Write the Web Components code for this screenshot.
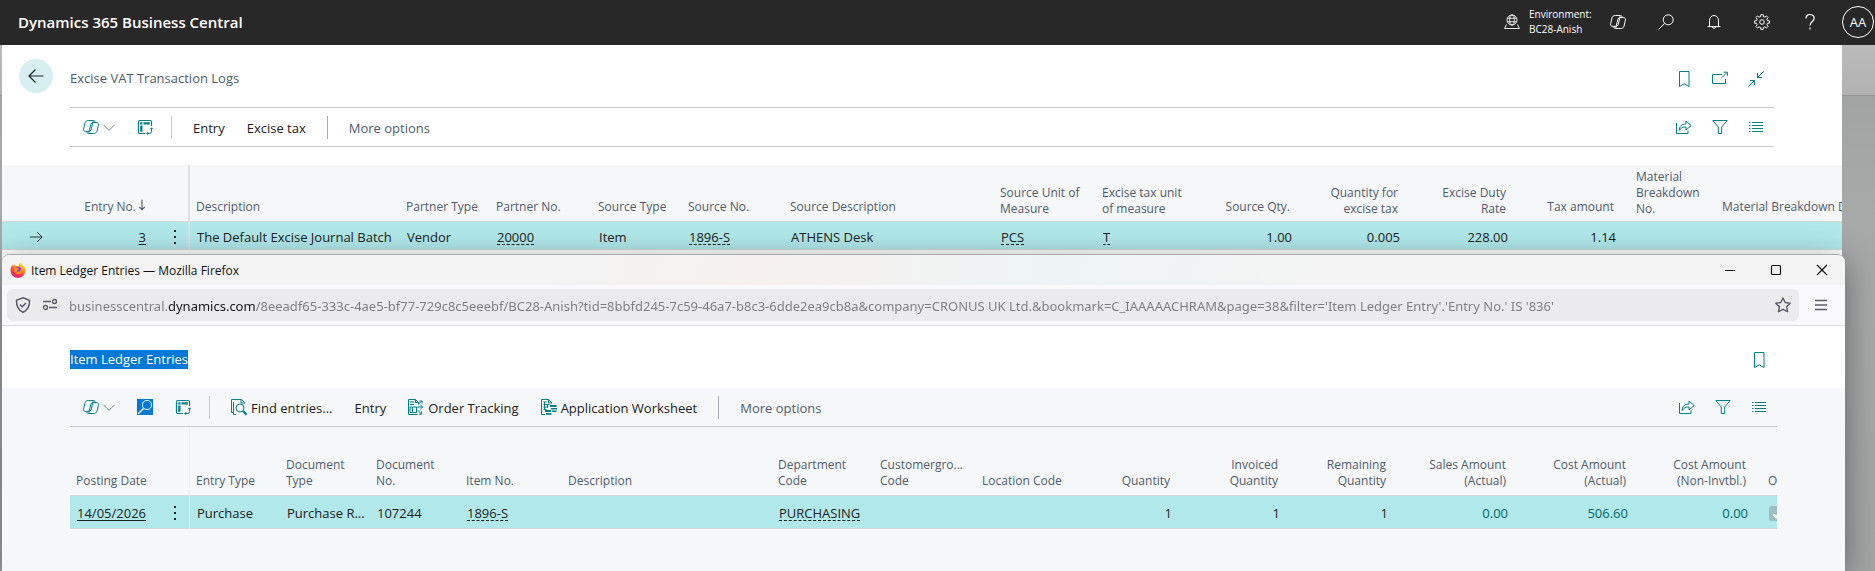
<!DOCTYPE html>
<html lang="en">
<head>
<meta charset="utf-8">
<title>Dynamics 365 Business Central</title>
<style>
  html, body {
    height: 100%;
    margin: 0;
  }

  body {
    --font: "Open Sans", "Noto Sans", sans-serif;
    --color-teal: #00808a;
    --color-dark: #212121;
    --color-muted: #505c6d;
    --color-surface: #f5f7f9;
    --color-row: #b1e9eb;
    --color-line: #c9cbcf;
    --text-small: 10px;
    --text-caption: 12px;
    --text-body: 13px;
    --text-title: 15px;
    display: flex;
    flex-direction: column;
    overflow: hidden;
    font-family: var(--font);
    font-size: var(--text-body);
    color: var(--color-dark);
    background-color: #a3a4a4;
  }

  main {
    flex: 1;
    min-height: 0;
    position: relative;
    overflow: hidden;
    padding: 0 33px 0 2px;
    background:
      linear-gradient(#949696, #949696) 0 50px / 100% 1px no-repeat,
      linear-gradient(#bababa, #b2b2b2) 0 0 / 100% 50px no-repeat,
      linear-gradient(#a0a1a1, #a7a8a8 30%, #a3a4a4);
  }

  /* The second browser window floats over the first page */
  browser-window {
    position: absolute;
    top: 209px;
    left: 2px;
    right: 30px;
    bottom: 0;
  }
</style>
</head>
<body>
<app-header></app-header>
<main>
  <list-page heading="Excise VAT Transaction Logs" back actions="bookmark,popout,collapse">
    <action-bar slot="actions" data-items='[
      {"icon": "copilot", "label": "Copilot", "menu": true},
      {"icon": "analyse", "label": "Analyse"},
      {"divider": "light"},
      {"text": "Entry"},
      {"text": "Excise tax"},
      {"divider": "dark"},
      {"text": "More options", "muted": true}
    ]' framed></action-bar>
    <data-grid id="logs" slot="grid" wide></data-grid>
  </list-page>
  <browser-window heading="Item Ledger Entries — Mozilla Firefox">
    <list-page heading="Item Ledger Entries" selected actions="bookmark">
      <action-bar slot="actions" data-items='[
        {"icon": "copilot", "label": "Copilot", "menu": true},
        {"icon": "find", "label": "Search"},
        {"icon": "analyse", "label": "Analyse"},
        {"divider": "light"},
        {"icon": "entries", "text": "Find entries..."},
        {"text": "Entry"},
        {"icon": "tracking", "text": "Order Tracking"},
        {"icon": "worksheet", "text": "Application Worksheet"},
        {"divider": "dark"},
        {"text": "More options", "muted": true}
      ]'></action-bar>
      <data-grid id="entries" slot="grid"></data-grid>
    </list-page>
  </browser-window>
</main>

<script>
// Outline of the settings gear, eight teeth round a centre of 8,8
function gearPath() {
  const points = [];
  for (let i = 0; i < 8; i++) {
    [[-14, 5.6], [-9, 7.5], [9, 7.5], [14, 5.6]].forEach(([offset, radius]) => {
      const angle = ((i * 45 + offset) * Math.PI) / 180;
      points.push(`${(8 + radius * Math.cos(angle)).toFixed(2)} ${(8 + radius * Math.sin(angle)).toFixed(2)}`);
    });
  }
  return `M${points.join("L")}Z`;
}

const leaf = "M5.300 1.500h3.700c.9 0 1.300.6 1.100 1.500L8 11c-.3.900-.9 1.400-1.800 1.400H2.800c-1.800 0-2.500-1-2.200-2.600l1.400-6C2.400 2.300 3.600 1.500 5.300 1.500z";

const icons = {
  copilot: `<path d="${leaf}"/><path d="${leaf}" transform="rotate(180 8 8)"/><path d="M9 1.500h1.500c1 0 1.500.5 1.700 1.400l.2.700M7 14.500H5.500c-1 0-1.500-.5-1.700-1.400l-.2-.7"/>`,
  chevron: `<path d="M.5 5l7.500 7.500L15.500 5" stroke-width="1.300"/>`,
  analyse: `<path d="M14.500 7V3q0-1.500-1.500-1.500H3Q1.500 1.500 1.500 3v10q0 1.500 1.500 1.500h5" stroke-width="1.200"/><path d="M3.200 3.200h2.300v2.300H3.200zM6.500 3.200h6.300v2.300H6.500zM3.200 6.500h2.300v6.300H3.200z" fill="currentColor" stroke="none"/><path d="M14.500 9v3.500q0 2-2 2H10M13.200 10.200l1.300-1.400 1.400 1.400M11.200 13.100l-1.400 1.400 1.400 1.400"/>`,
  globe: `<g stroke-width=".9"><circle cx="8" cy="6" r="5"/><ellipse cx="8" cy="6" rx="2.300" ry="5"/><path d="M3.400 4.200h9.200M3.400 7.800h9.200M2.500 10.500L.6 14.500h14.800l-1.900-4"/></g>`,
  search: `<circle cx="10.200" cy="5.800" r="5"/><path d="M6.600 9.400L.6 15.400"/>`,
  bell: `<path d="M3.500 12.500v-6a4.500 5 0 0 1 9 0v6M1.600 12.600h12.800M6.300 13a1.800 1.800 0 0 0 3.400 0"/>`,
  gear: `<path d="${gearPath()}"/><circle cx="8" cy="8" r="2.300"/>`,
  help: `<path d="M4 4.500C4 2 5.800.5 8 .5s4.200 1.500 4.200 3.800c0 3-4.200 3.500-4.200 7.200M8 13.600v1.800" stroke-width="1.200"/>`,
  bookmark: `<path d="M3.500.5h9.500v15L8.200 12.800l-4.700 2.700z"/>`,
  popout: `<path d="M10 3.500H.5v9h13V8M10 6.500L15 1.500M11.500 1.200h3.900v3.900"/>`,
  collapse: `<path d="M15.700.3L9.700 6.300M9.500 2v4.500H14M.3 15.700l6-6M2 9.500h4.500V14"/>`,
  share: `<path d="M.5 4v10.500h11.500V11.500M3.200 11.500c0-4 2.300-6.500 6.800-6.500V2l5.200 4.500-5.200 4.500V8c-3.500-.1-5.300 1-6.800 3.500z"/>`,
  filter: `<path d="M.8 1.500h14.400L9.700 8v6.500H6.300V8z"/>`,
  list: `<path d="M1 3.500h1.500M4 3.500h11M1 6.500h1.500M4 6.500h11M1 9.500h1.500M4 9.500h11M1 12.500h1.500M4 12.500h11" stroke-width="1.200"/>`,
  back: `<path d="M15.500 8H1M7.500 1.500L1 8l6.500 6.500" stroke-width="1.200"/>`,
  arrow: `<path d="M1 8h14M9.500 2.500L15 8l-5.500 5.500"/>`,
  sort: `<path d="M8 1v13M4.300 10.500L8 14.300l3.700-3.800" stroke-width="1.500"/>`,
  more: `<path d="M7 1h2v2H7zM7 7h2v2H7zM7 13h2v2H7z" fill="currentColor" stroke="none"/>`,
  find: `<path d="M0 0h16v16H0z" fill="#0078d7" stroke="none"/><g stroke="#fff"><circle cx="10" cy="6" r="4.600"/><path d="M6.600 9.400l-5.600 5.600" stroke-width="1.400"/></g>`,
  entries: `<path d="M2.500 13.500h-2V.5h10l3 3v1M10 .5v3.500h3.500M5 15.500H2.500V3"/><circle cx="9" cy="9" r="4"/><path d="M12 12l3.600 3.600" stroke-width="2.200"/>`,
  tracking: `<path d="M9.500 15.500H.5V.5h7l3 3v2M7.500.5v3h3M2 3h4M2 5.500h4M2 8h2.500v5.500H2zM5 8h3.500v5.500H5"/><path d="M9 8h5.500M12.500 6l2.200 2-2.200 2M9.500 11l4 4M13.700 12.500v2.700H11M10.500 5l3.500-3M11.500 2H14v2.500"/>`,
  worksheet: `<path d="M4 15.500H.5V.5h7l3.500 3.500M7.500.5V4H11M2.500 3h3M2.500 5.500h6M2.500 8h4M2.500 10.500h3M3.500 3v8M6.500 5.500V9"/><path d="M9 6h6.500v2H9zM10 9h6v1.500h-6zM4 11h6v2H4zM5 14h5.500v1.700H5zM11 11.500h4.500V13H11z" fill="currentColor" stroke="none"/>`,
  firefox: `<defs><linearGradient id="fox" x1=".8" y1="0" x2=".2" y2="1"><stop offset="0" stop-color="#fff44f"/><stop offset=".35" stop-color="#ff980e"/><stop offset=".65" stop-color="#ff3750"/><stop offset="1" stop-color="#e31587"/></linearGradient></defs><path d="M10.300.2c1 1 1.800 2 2 3.100 1.700.8 3.200 3 3.200 5.200A7.400 7.400 0 0 1 .5 8.400c0-2.300.6-3.900 1.800-5.700l.6 1.500c.5-.8 1-1.300 1.700-1.600l.4 1.500c1.500-.2 2.500-.2 3.600.1C8.400 2.700 9.300 1.500 10.300.2z" fill="url(#fox)" stroke="none"/><circle cx="7.800" cy="8" r="3.300" fill="#7b3ff2" stroke="none"/><path d="M3.500 5.800c1.600-.8 3-.5 4.200.3L9 7.300 7 8.200c-.6 1 .8 1.800 2 1.400 1.800-.5 2.300-2 1.700-3.800 2.300 2 1.300 6.300-2.500 6.400-3 0-4.900-2.800-4.700-6.400z" fill="#ff8a16" stroke="none"/>`,
  shield: `<path d="M8 .8l6.500 2.400c.2 5.800-1.500 9.800-6.500 12-5-2.200-6.700-6.200-6.500-12zM5 7.600l2.200 2.200L11 6" stroke-width="1.500"/>`,
  sliders: `<path d="M1 4.500h8M7 10.500h8" stroke-width="1.500"/><circle cx="12.500" cy="4.500" r="2" stroke-width="1.300"/><circle cx="3.500" cy="10.500" r="2" stroke-width="1.300"/>`,
  star: `<path d="M8 1l2.200 4.500 5 .7-3.600 3.500.9 4.900L8 12.300l-4.500 2.300.9-4.900L.8 6.200l5-.7z" stroke-width="1.400" stroke-linejoin="round"/>`,
  burger: `<path d="M2 3.500h12M2 8h12M2 12.500h12" stroke-width="1.300"/>`,
  minimise: `<path d="M3 8.500h10"/>`,
  maximise: `<rect x="3.500" y="3.500" width="9" height="9" rx="1" stroke-width="1.200"/>`,
  close: `<path d="M3 3l10 10M13 3L3 13" stroke-width="1.200"/>`,
};

// Inline icon, picked by name
class UiIcon extends HTMLElement {
  constructor() {
    super();
    this.attachShadow({ mode: "open" });
  }

  connectedCallback() {
    this.shadowRoot.innerHTML = `
      <style>
        :host {
          display: inline-block;
          flex: none;
          width: 16px;
          height: 16px;
        }

        svg {
          display: block;
          width: 100%;
          height: 100%;
          overflow: visible;
        }
      </style>
      <svg viewBox="0 0 16 16" fill="none" stroke="currentColor" aria-hidden="true">${icons[this.getAttribute("name")]}</svg>
    `;
  }
}

// Reset shared by every element that holds buttons
const buttonStyles = `
  button {
    display: flex;
    align-items: center;
    justify-content: center;
    margin: 0;
    padding: 0;
    border: none;
    background: none;
    font: inherit;
    color: inherit;
    white-space: nowrap;
  }
`;

// Dark bar along the top of the app
class AppHeader extends HTMLElement {
  constructor() {
    super();
    this.attachShadow({ mode: "open" });
  }

  connectedCallback() {
    const buttons = [["copilot", "Copilot"], ["search", "Search"], ["bell", "Notifications"], ["gear", "Settings"], ["help", "Help"]];
    this.shadowRoot.innerHTML = `
      <style>
        ${buttonStyles}
        :host {
          display: flex;
          align-items: center;
          flex: none;
          height: 45px;
          box-sizing: border-box;
          padding: 0 1px 2px 18px;
          background-color: #282828;
          color: #fff;
        }

        .title {
          flex: 1;
          font-size: var(--text-title);
          font-weight: 600;
        }

        .environment {
          display: flex;
          align-items: center;
          gap: 9px;
          width: 90px;
          font-size: var(--text-small);
          line-height: 15px;
          white-space: nowrap;
        }

        nav {
          display: flex;
        }

        nav button {
          width: 48px;
          height: 42px;
        }

        .avatar {
          width: 32px;
          height: 32px;
          margin: 0 0 0 8px;
          border: 1px solid #fff;
          border-radius: 50%;
        }
      </style>
      <span class="title">Dynamics 365 Business Central</span>
      <div class="environment">
        <ui-icon name="globe"></ui-icon>
        <span>Environment:<br>BC28-Anish</span>
      </div>
      <nav>
        ${buttons.map(([icon, label]) => `<button aria-label="${label}"><ui-icon name="${icon}"></ui-icon></button>`).join("")}
      </nav>
      <button class="avatar">AA</button>
    `;
  }
}

// Page with a heading row, an action bar and a grid
class ListPage extends HTMLElement {
  constructor() {
    super();
    this.attachShadow({ mode: "open" });
  }

  connectedCallback() {
    const actions = this.getAttribute("actions").split(",");
    const back = this.hasAttribute("back")
      ? `<button class="back" aria-label="Back"><ui-icon name="back"></ui-icon></button>`
      : "";
    this.shadowRoot.innerHTML = `
      <style>
        ${buttonStyles}
        :host {
          display: block;
          height: 100%;
          background-color: #fff;
        }

        :host([selected]) .body {
          height: 100%;
          background-color: var(--color-surface);
        }

        :host([selected]) h1 {
          background-color: #0078d7;
          color: #fff;
        }

        header {
          display: flex;
          align-items: center;
          height: 62px;
          padding: 5px 78px 0 68px;
          box-sizing: border-box;
        }

        :host([back]) header {
          padding-left: 17px;
        }

        .back {
          width: 34px;
          height: 34px;
          margin: 0 17px 5px 0;
          border-radius: 50%;
          background-color: #d8eff1;
        }

        h1 {
          margin: 0 auto 0 0;
          font-size: var(--text-body);
          font-weight: 400;
          line-height: 19px;
          color: var(--color-muted);
        }

        .actions {
          display: flex;
          gap: 20px;
          color: var(--color-teal);
        }

        .actions-bar {
          padding: 0 68px;
        }
      </style>
      <header>
        ${back}
        <h1>${this.getAttribute("heading")}</h1>
        <div class="actions">
          ${actions.map((name) => `<button aria-label="${name}"><ui-icon name="${name}"></ui-icon></button>`).join("")}
        </div>
      </header>
      <div class="body">
        <div class="actions-bar"><slot name="actions"></slot></div>
        <slot name="grid"></slot>
      </div>
    `;
  }
}

// Row of actions above a grid
class ActionBar extends HTMLElement {
  constructor() {
    super();
    this.attachShadow({ mode: "open" });
  }

  connectedCallback() {
    const items = JSON.parse(this.dataset.items);
    this.shadowRoot.innerHTML = `
      <style>
        ${buttonStyles}
        :host {
          display: flex;
          align-items: center;
          gap: 22px;
          height: 38px;
          padding: 0 10px 0 13px;
          border-bottom: 1px solid var(--color-line);
        }

        :host([framed]) {
          border-top: 1px solid var(--color-line);
        }

        button {
          gap: 4px;
        }

        button span {
          padding-top: 2px;
        }

        ui-icon {
          color: var(--color-teal);
        }

        .chevron {
          width: 12px;
          height: 12px;
          color: #76808c;
        }

        .muted {
          color: var(--color-muted);
        }

        .divider {
          width: 1px;
          height: 23px;
          margin: 0 -1px;
          background-color: #a9adb5;
        }

        .light {
          margin-left: -4px;
          background-color: var(--color-line);
        }

        .end {
          display: flex;
          gap: 20px;
          margin-left: auto;
        }
      </style>
      ${items.map((item) => this.renderItem(item)).join("")}
      <div class="end">
        <button aria-label="Share"><ui-icon name="share"></ui-icon></button>
        <button aria-label="Filter"><ui-icon name="filter"></ui-icon></button>
        <button aria-label="List"><ui-icon name="list"></ui-icon></button>
      </div>
    `;
  }

  renderItem({ icon, text, label, menu, muted, divider }) {
    if (divider) {
      return `<span class="divider ${divider}"></span>`;
    }
    return `
      <button class="${muted ? "muted" : ""}" ${label ? `aria-label="${label}"` : ""}>
        ${icon ? `<ui-icon name="${icon}"></ui-icon>` : ""}
        ${text ? `<span>${text}</span>` : ""}
        ${menu ? `<ui-icon class="chevron" name="chevron"></ui-icon>` : ""}
      </button>
    `;
  }
}

// Table of records, filled through its "columns" property
class DataGrid extends HTMLElement {
  constructor() {
    super();
    this.attachShadow({ mode: "open" });
  }

  set columns(columns) {
    this.shadowRoot.innerHTML = `
      <style>
        ${buttonStyles}
        :host {
          display: block;
          margin: 0 68px;
          overflow: hidden;
          background-color: var(--color-surface);
          --head-height: 69px;
          --row-height: 33px;
          --head-bottom: 6px;
          --single-line: 16px;
          --frozen: 1px solid #eff0f3;
        }

        :host([wide]) {
          margin: 18px 0 0;
          --head-height: 57px;
          --row-height: 28px;
          --head-bottom: 4px;
          --single-line: 20px;
          --frozen: 2px solid #e0e1e5;
        }

        table {
          width: 100%;
          table-layout: fixed;
          border-collapse: separate;
          border-spacing: 0;
        }

        th, td {
          box-sizing: border-box;
          text-align: left;
          font-weight: 400;
          white-space: nowrap;
          border-bottom: 1px solid #d5d7db;
        }

        th {
          height: var(--head-height);
          padding: 0 0 var(--head-bottom) 6px;
          vertical-align: bottom;
          font-size: var(--text-caption);
          line-height: 16px;
          color: var(--color-muted);
        }

        th.single {
          line-height: var(--single-line);
        }

        td {
          height: var(--row-height);
          padding: 2px 0 0 7px;
          font-size: var(--text-body);
          background-color: var(--color-row);
        }

        th.number {
          padding-right: 16px;
          text-align: right;
        }

        td.number {
          padding-right: 14px;
          text-align: right;
        }

        .frozen {
          border-right: var(--frozen);
        }

        td.teal {
          color: #00666e;
        }

        a {
          color: inherit;
          text-decoration: underline 1px;
          text-decoration-skip-ink: none;
          text-underline-offset: 2px;
        }

        a.lookup {
          text-decoration-style: dashed;
        }

        th ui-icon {
          width: 12px;
          height: 12px;
          margin: 0 -4px 0 0;
        }

        td ui-icon {
          display: block;
        }

        .marker {
          padding-left: 27px;
        }

        .marker ui-icon {
          width: 14px;
          height: 14px;
        }

        input {
          position: relative;
          display: block;
          appearance: none;
          width: 15px;
          height: 15px;
          margin: 0;
          border-radius: 3px;
          background-color: #9ebfc2;
        }

        input::after {
          content: "";
          position: absolute;
          top: 5px;
          left: 4px;
          width: 7px;
          height: 3px;
          border: solid #fff;
          border-width: 0 0 2px 2px;
          transform: rotate(-45deg);
        }
      </style>
      <table>
        <colgroup>${columns.map(({ width }) => `<col${width ? ` style="width: ${width}px"` : ""}>`).join("")}</colgroup>
        <thead><tr>${columns.map((column) => this.renderHead(column)).join("")}</tr></thead>
        <tbody><tr>${columns.map((column) => this.renderCell(column)).join("")}</tr></tbody>
      </table>
    `;
  }

  renderHead({ title = "", type = "", sorted }) {
    const single = title.includes("<br>") ? "" : "single";
    const sort = sorted ? `<ui-icon name="sort"></ui-icon>` : "";
    return `<th scope="col" class="${type} ${single}">${title}${sort}</th>`;
  }

  renderCell({ type = "", value = "", link }) {
    let content = value;
    if (link) {
      content = `<a href="#" class="${link}">${value}</a>`;
    } else if (type === "marker") {
      content = `<ui-icon name="arrow"></ui-icon>`;
    } else if (type === "frozen") {
      content = `<button aria-label="Show more options"><ui-icon name="more"></ui-icon></button>`;
    } else if (type === "check") {
      content = `<input type="checkbox" aria-label="Open" checked disabled>`;
    }
    return `<td class="${type}">${content}</td>`;
  }
}

// Firefox window with a title bar and an address bar
class BrowserWindow extends HTMLElement {
  constructor() {
    super();
    this.attachShadow({ mode: "open" });
  }

  connectedCallback() {
    this.shadowRoot.innerHTML = `
      <style>
        ${buttonStyles}
        :host {
          display: flex;
          flex-direction: column;
          overflow: hidden;
          box-sizing: border-box;
          border-top: 1px solid #a9abad;
          border-radius: 8px 8px 0 0;
          background-color: #f9f9fb;
          box-shadow: 0 6px 32px rgba(0, 0, 0, 0.4);
        }

        .titlebar {
          display: flex;
          align-items: center;
          height: 30px;
          padding-left: 8px;
          background: linear-gradient(100deg, #f3f3f3 30%, #f6f1ef 41%, #eef4f5 57%, #f3f3f3 72%);
          font-size: var(--text-caption);
          color: #111;
        }

        .titlebar span {
          flex: 1;
          margin-left: 5px;
        }

        .titlebar button {
          width: 46px;
          height: 30px;
        }

        .toolbar {
          display: flex;
          align-items: center;
          height: 40px;
          padding: 0 8px 0 5px;
          border-bottom: 1px solid #dcdce0;
          color: #5b5b66;
        }

        .address {
          flex: 1;
          display: flex;
          align-items: center;
          gap: 11px;
          height: 32px;
          padding: 0 8px;
          border-radius: 6px;
          background-color: #ebebed;
        }

        /* The domain part of the address is darker than the rest */
        input {
          flex: 1;
          min-width: 0;
          padding: 2px 0 0;
          border: none;
          outline: none;
          font-family: "Noto Sans", sans-serif;
          font-size: var(--text-body);
          color: transparent;
          background: linear-gradient(90deg, #7c7c81 var(--from), #15141a var(--from), #15141a var(--to), #7c7c81 var(--to));
          background-clip: text;
          -webkit-background-clip: text;
        }

        .toolbar > button {
          width: 32px;
          height: 32px;
          margin-left: 6px;
        }

        .content {
          flex: 1;
          min-height: 0;
        }
      </style>
      <div class="titlebar">
        <ui-icon name="firefox"></ui-icon>
        <span>${this.getAttribute("heading")}</span>
        <button aria-label="Minimise"><ui-icon name="minimise"></ui-icon></button>
        <button aria-label="Maximise"><ui-icon name="maximise"></ui-icon></button>
        <button aria-label="Close"><ui-icon name="close"></ui-icon></button>
      </div>
      <div class="toolbar">
        <div class="address">
          <ui-icon name="shield"></ui-icon>
          <ui-icon name="sliders"></ui-icon>
          <input type="text" aria-label="Address" value="businesscentral.dynamics.com/8eeadf65-333c-4ae5-bf77-729c8c5eeebf/BC28-Anish?tid=8bbfd245-7c59-46a7-b8c3-6dde2ea9cb8a&amp;company=CRONUS UK Ltd.&amp;bookmark=C_IAAAAACHRAM&amp;page=38&amp;filter='Item Ledger Entry'.'Entry No.' IS '836'">
          <ui-icon name="star"></ui-icon>
        </div>
        <button aria-label="Menu"><ui-icon name="burger"></ui-icon></button>
      </div>
      <div class="content"><slot></slot></div>
    `;
    this.markDomain();
  }

  // Find where the domain starts and ends inside the address
  markDomain() {
    const input = this.shadowRoot.querySelector("input");
    const context = document.createElement("canvas").getContext("2d");
    const { fontSize, fontFamily } = getComputedStyle(input);
    context.font = `${fontSize} ${fontFamily}`;
    input.style.setProperty("--from", `${Math.round(context.measureText("businesscentral.").width)}px`);
    input.style.setProperty("--to", `${Math.round(context.measureText("businesscentral.dynamics.com").width)}px`);
  }
}

customElements.define("ui-icon", UiIcon);
customElements.define("app-header", AppHeader);
customElements.define("list-page", ListPage);
customElements.define("action-bar", ActionBar);
customElements.define("data-grid", DataGrid);
customElements.define("browser-window", BrowserWindow);

document.getElementById("logs").columns = [
  { width: 68, type: "marker" },
  { width: 90, title: "Entry No.", value: "3", type: "number", link: "record", sorted: true },
  { width: 30, type: "frozen" },
  { width: 210, title: "Description", value: "The Default Excise Journal Batch" },
  { width: 90, title: "Partner Type", value: "Vendor" },
  { width: 102, title: "Partner No.", value: "20000", link: "lookup" },
  { width: 90, title: "Source Type", value: "Item" },
  { width: 102, title: "Source No.", value: "1896-S", link: "lookup" },
  { width: 210, title: "Source Description", value: "ATHENS Desk" },
  { width: 102, title: "Source Unit of<br>Measure", value: "PCS", link: "lookup" },
  { width: 102, title: "Excise tax unit<br>of measure", value: "T", link: "lookup" },
  { width: 108, title: "Source Qty.", value: "1.00", type: "number" },
  { width: 108, title: "Quantity for<br>excise tax", value: "0.005", type: "number" },
  { width: 108, title: "Excise Duty<br>Rate", value: "228.00", type: "number" },
  { width: 108, title: "Tax amount", value: "1.14", type: "number" },
  { width: 86, title: "Material<br>Breakdown<br>No." },
  { title: "Material Breakdown D" },
];

document.getElementById("entries").columns = [
  { width: 90, title: "Posting Date", value: "14/05/2026", link: "record" },
  { width: 30, type: "frozen" },
  { width: 90, title: "Entry Type", value: "Purchase" },
  { width: 90, title: "Document<br>Type", value: "Purchase R..." },
  { width: 90, title: "Document<br>No.", value: "107244" },
  { width: 102, title: "Item No.", value: "1896-S", link: "lookup" },
  { width: 210, title: "Description" },
  { width: 102, title: "Department<br>Code", value: "PURCHASING", link: "lookup" },
  { width: 102, title: "Customergro...<br>Code" },
  { width: 102, title: "Location Code" },
  { width: 108, title: "Quantity", value: "1", type: "number" },
  { width: 108, title: "Invoiced<br>Quantity", value: "1", type: "number" },
  { width: 108, title: "Remaining<br>Quantity", value: "1", type: "number" },
  { width: 120, title: "Sales Amount<br>(Actual)", value: "0.00", type: "number teal" },
  { width: 120, title: "Cost Amount<br>(Actual)", value: "506.60", type: "number teal" },
  { width: 120, title: "Cost Amount<br>(Non-Invtbl.)", value: "0.00", type: "number teal" },
  { title: "O", type: "check" },
];
</script>
</body>
</html>
